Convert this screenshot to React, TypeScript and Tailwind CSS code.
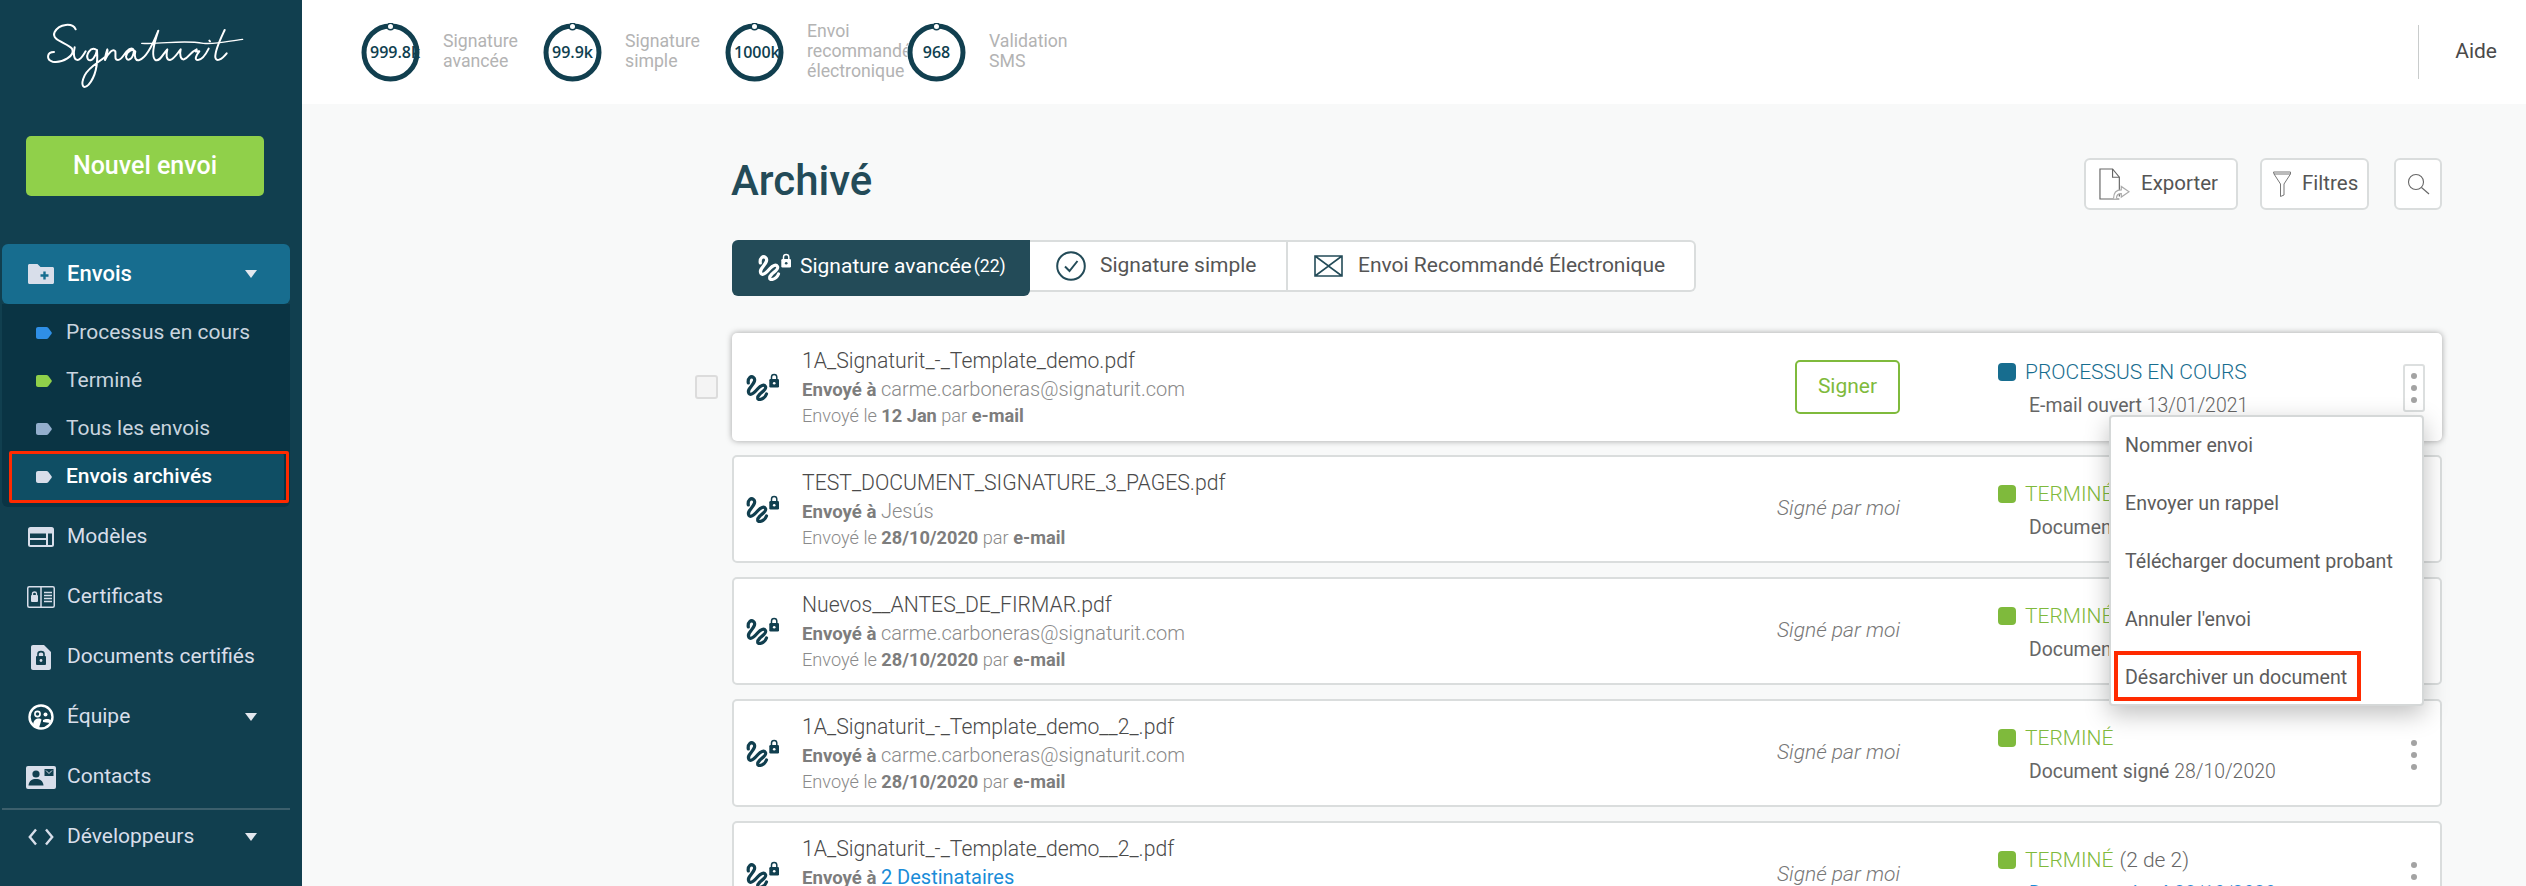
const counters = [
  { value: "999.8k", label: ["Signature", "avancée"] },
  { value: "99.9k", label: ["Signature", "simple"] },
  { value: "1000k", label: ["Envoi", "recommandé", "électronique"] },
  { value: "968", label: ["Validation", "SMS"] },
];

const rows = [
  { name: "TEST_DOCUMENT_SIGNATURE_3_PAGES.pdf", to: "Jesús", date: "28/10/2020" },
  { name: "Nuevos__ANTES_DE_FIRMAR.pdf", to: "carme.carboneras@signaturit.com", date: "28/10/2020" },
  { name: "1A_Signaturit_-_Template_demo__2_.pdf", to: "carme.carboneras@signaturit.com", date: "28/10/2020" },
];

const menu = ["Nommer envoi", "Envoyer un rappel", "Télécharger document probant", "Annuler l'envoi"];

function Logo() {
  return (
    <svg viewBox="0 0 690 270" className="w-[230px] h-[90px]" fill="none" stroke="#fff" strokeWidth="6" strokeLinecap="round" strokeLinejoin="round">
      <path d="M137 58C128 38 88 40 74 66C62 92 112 98 126 116C138 136 96 160 68 155C48 150 50 126 72 126" />
      <path d="M134 112C130 128 130 150 143 150C152 150 158 138 167 124" />
      <path d="M197 118C182 110 166 134 174 148C184 158 198 140 201 120C204 160 196 200 176 224C160 240 150 226 164 196C176 172 204 158 226 140C232 128 234 120 232 118C228 130 225 142 225 150C236 126 250 114 256 124C258 136 252 150 264 150C274 150 280 136 290 124C302 112 316 112 310 132C304 152 290 154 288 140C290 122 308 116 316 124C312 140 316 154 328 150C344 146 362 120 385 62C372 100 364 140 376 150C390 156 400 130 412 118C408 134 408 150 420 150C432 148 442 130 452 118C448 134 452 150 462 148C476 144 480 126 500 118C494 130 498 122 508 124C498 136 492 150 504 150C516 150 526 136 536 116" />
      <path d="M538 92L540 94" />
      <path d="M584 60C570 90 554 122 556 142C558 156 574 150 590 130" />
      <path d="M335 100C400 104 450 88 520 100C560 104 600 92 638 88" strokeWidth="4" />
    </svg>
  );
}

function Tag({ color }: { color: string }) {
  return (
    <svg viewBox="0 0 16 12" className="w-4 h-3 shrink-0">
      <path d="M2 0H10.5C11.2 0 11.8.3 12.2.8L15.6 5.2C15.9 5.7 15.9 6.3 15.6 6.8L12.2 11.2C11.8 11.7 11.2 12 10.5 12H2C.9 12 0 11.1 0 10V2C0 .9.9 0 2 0Z" fill={color} />
    </svg>
  );
}

function Caret() {
  return (
    <svg viewBox="0 0 12 8" className="w-3 h-2 ml-auto mr-[33px]">
      <path d="M0 0H12L6 8Z" fill="#e3e8ef" />
    </svg>
  );
}

const tint = "#d8deea";
const navBg = "#113f4f";

function FolderIcon() {
  return (
    <svg viewBox="0 0 26 20" className="w-[26px] h-5">
      <path d="M1.5 0H9.5L12.5 3H24.5C25.3 3 26 3.7 26 4.5V18.5C26 19.3 25.3 20 24.5 20H1.5C.7 20 0 19.3 0 18.5V1.5C0 .7.7 0 1.5 0Z" fill={tint} />
      <path d="M16.5 7.5V15.5M12.5 11.5H20.5" stroke="#176d8f" strokeWidth="2.4" />
    </svg>
  );
}

function ModelsIcon() {
  return (
    <svg viewBox="0 0 26 20" className="w-[26px] h-5">
      <rect width="26" height="20" rx="2.5" fill={tint} />
      <path d="M2 6.5H18V11H2ZM2 13H18V18H2ZM20 6.5H24V18H20Z" fill={navBg} />
    </svg>
  );
}

function CertIcon() {
  return (
    <svg viewBox="0 0 28 22" className="w-7 h-[22px]" fill="none">
      <rect x=".75" y=".75" width="26.5" height="20.5" rx="1.5" stroke={tint} strokeWidth="1.5" />
      <path d="M14 1V21" stroke={tint} strokeWidth="1.5" />
      <rect x="4" y="9" width="7" height="7" rx="1" fill={tint} />
      <path d="M5.5 9.5V7.5C5.5 5.5 9.5 5.5 9.5 7.5V9.5" stroke={tint} strokeWidth="1.3" />
      <path d="M17 6.5H25M17 9.5H25M17 12.5H25M17 15.5H25" stroke={tint} strokeWidth="1.5" />
    </svg>
  );
}

function DocLockIcon() {
  return (
    <svg viewBox="0 0 20 25" className="w-5 h-[25px]" fill="none">
      <path d="M2 0H13L20 7V23C20 24.1 19.1 25 18 25H2C.9 25 0 24.1 0 23V2C0 .9.9 0 2 0Z" fill={tint} />
      <rect x="5" y="11" width="10" height="9" rx="1" fill={navBg} />
      <path d="M7 11V9C7 5.8 13 5.8 13 9V11" stroke={navBg} strokeWidth="1.6" />
      <circle cx="10" cy="15.5" r="1.4" fill={tint} />
    </svg>
  );
}

function TeamIcon() {
  return (
    <svg viewBox="0 0 26 26" className="w-[26px] h-[26px]" fill="none">
      <circle cx="13" cy="13" r="11.5" stroke="#fff" strokeWidth="2.4" />
      <circle cx="9.5" cy="10" r="2.6" stroke="#fff" strokeWidth="1.6" />
      <circle cx="17.5" cy="10.5" r="2" fill="#fff" />
      <path d="M5 22C5 16 8 14.5 11 14.5C12 14.5 13 15 13.5 15.5L11 24Z" fill="#fff" />
      <path d="M15 16C17 14.5 21 14.5 23 16L22 19L15 18Z" fill="#fff" />
    </svg>
  );
}

function ContactIcon() {
  return (
    <svg viewBox="0 0 30 23" className="w-[30px] h-[23px]" fill="none">
      <rect width="30" height="23" rx="2" fill={tint} />
      <circle cx="10" cy="8" r="3.6" fill={navBg} />
      <path d="M2.5 19.5C3 14.5 6 13 10 13C14 13 17 14.5 17.5 19.5Z" fill={navBg} />
      <rect x="18.5" y="3" width="9" height="7" fill={navBg} />
      <path d="M20 4.5L23 7.5L26 4.5" stroke={tint} strokeWidth="1" />
    </svg>
  );
}

function CodeIcon() {
  return (
    <svg viewBox="0 0 26 18" className="w-[26px] h-[18px]" fill="none" stroke={tint} strokeWidth="2.4">
      <path d="M8 1.5L1.8 9L8 16.5M18 1.5L24.2 9L18 16.5" />
    </svg>
  );
}

function SignIcon({ color, hole, className }: { color: string; hole: string; className: string }) {
  return (
    <svg viewBox="0 0 33 28" className={className} fill="none">
      <path d="M2.3 10C1.5 5 5 2.5 7.5 4.5C10 6.5 8 10 5.5 13C3 16 1.5 18 3 20.5C5 23 9 19 12 15.5C14.5 12.5 18 11 19.5 13.5C21 16 16 19 13.5 21.5C11 24 11 27 14 26.5C17 26 19.5 23.5 20.5 21" stroke={color} strokeWidth="3.2" strokeLinecap="round" />
      <rect x="23.3" y="6" width="9.7" height="8.5" rx="1.2" fill={color} />
      <path d="M25.5 6.5V4C25.5 .5 30.8 .5 30.8 4V6.5" stroke={color} strokeWidth="1.5" />
      <circle cx="28.2" cy="10.2" r="1.3" fill={hole} />
    </svg>
  );
}

function Kebab({ boxed }: { boxed?: boolean }) {
  return (
    <div className={`w-[22px] h-[48px] shrink-0 flex flex-col items-center justify-center gap-[6px] rounded-[3px] border-2 ${boxed ? "border-[#dcdfdf]" : "border-transparent"}`}>
      <span className="w-[6px] h-[6px] rounded-full bg-[#a3a3a3]" />
      <span className="w-[6px] h-[6px] rounded-full bg-[#a3a3a3]" />
      <span className="w-[6px] h-[6px] rounded-full bg-[#a3a3a3]" />
    </div>
  );
}

function Status({ label, color, note, extra, noteColor }: { label: string; color: string; note: string; extra: string; noteColor?: string }) {
  return (
    <div className="w-[405px] shrink-0 self-start pt-[25px]">
      <div className="flex items-center h-[26px]">
        <span className="w-[18px] h-[18px] rounded-[4px] mr-[9px] -mt-[2px]" style={{ background: color }} />
        <span className="text-[21px] font-light" style={{ color }}>{label}</span>
        {extra === "2" && <span className="ml-[6px] text-[21px] font-light text-[#666]">(2 de 2)</span>}
      </div>
      <div className="ml-[31px] mt-[5px] text-[19.4px] text-[#666] whitespace-nowrap" style={{ color: noteColor }}>
        {note} <span className="font-light">{extra === "2" ? "28/10/2020" : extra}</span>
      </div>
    </div>
  );
}

function FileInfo({ name, to, date, link }: { name: string; to: string; date: string; link?: boolean }) {
  return (
    <div className="flex-1 min-w-0">
      <div className="text-[21.2px] leading-[28px] font-light text-[#4a4a4a]">{name}</div>
      <div className="text-[18.6px] leading-[25px] mt-[2px] text-[#8a8a8a] font-light whitespace-nowrap">
        <b className="font-bold text-[#7d7d7d]">Envoyé à</b>{" "}
        <span className={`text-[20px] ${link ? "text-[#1a8cd8] font-normal" : ""}`}>{to}</span>
      </div>
      <div className="text-[18.2px] leading-[25px] text-[#8a8a8a] font-light">
        Envoyé le <b className="font-bold text-[#7d7d7d]">{date}</b> par <b className="font-bold text-[#7d7d7d]">e-mail</b>
      </div>
    </div>
  );
}

function SignedBy() {
  return <div className="w-[140px] shrink-0 text-right text-[21px] italic font-light text-[#777]">Signé par moi</div>;
}

function Row({ children, first }: { children: React.ReactNode; first?: boolean }) {
  return (
    <div className="flex items-start">
      <div className="w-[37px] shrink-0 h-[108px] flex items-center">
        {first && <span className="w-[23px] h-[24px] rounded-[3px] border-2 border-[#dcdcdc] bg-[#f4f4f4]" />}
      </div>
      <div className={`relative flex-1 h-[108px] flex items-center pl-3 pr-[15px] bg-white rounded-[5px] border-2 border-[#dadddd] ${first ? "shadow-[0_0_6px_rgba(0,0,0,0.35)] border-transparent" : ""}`}>
        {children}
      </div>
    </div>
  );
}

function NavItem({ icon, label, caret }: { icon: React.ReactNode; label: string; caret?: boolean }) {
  return (
    <div className="flex items-center h-[60px] ml-[2px] mr-[12px] pl-6">
      <span className="w-[30px] flex justify-center">{icon}</span>
      <span className="ml-[11px] text-[21px] text-[#d8deea]">{label}</span>
      {caret && <Caret />}
    </div>
  );
}

function SubItem({ color, label }: { color: string; label: string }) {
  return (
    <div className="flex items-center h-[48px] pl-[34px]">
      <Tag color={color} />
      <span className="ml-[14px] text-[21px] text-[#c9d4df]">{label}</span>
    </div>
  );
}

export default function App() {
  return (
    <div className="flex w-screen h-screen overflow-hidden font-[Roboto,sans-serif] bg-[#f8f9f9]">
      <aside className="w-[302px] shrink-0 bg-[#113f4f] flex flex-col">
        <div className="h-[136px] pl-[30px] pt-[10px]">
          <Logo />
        </div>
        <button className="mx-[26px] w-[238px] h-[60px] shrink-0 rounded-[5px] bg-[#90d04a] text-white text-[25px] font-medium">Nouvel envoi</button>
        <div className="mt-[48px] ml-[2px] mr-[12px] h-[60px] shrink-0 rounded-[6px] bg-[#176d8f] flex items-center pl-6">
          <span className="w-[30px] flex justify-center"><FolderIcon /></span>
          <span className="ml-[11px] text-[22px] font-medium text-white -mt-[2px]">Envois</span>
          <Caret />
        </div>
        <div className="ml-[2px] mr-[12px] pt-[5px] h-[203px] shrink-0 rounded-b-[6px] bg-[#0a3444]">
          <SubItem color="#2f8fe6" label="Processus en cours" />
          <SubItem color="#90d04a" label="Terminé" />
          <SubItem color="#93aecd" label="Tous les envois" />
          <div className="relative flex items-center h-[48px] ml-[9px] mr-[6px] pl-[25px] bg-[#0f4e64] rounded-[3px]">
            <Tag color="#d8deea" />
            <span className="ml-[14px] text-[21px] font-medium text-white">Envois archivés</span>
            <span className="absolute -left-[2px] -right-[5px] -top-[2px] -bottom-[2px] border-[3px] border-[#ff2a00] rounded-[2px]" />
          </div>
        </div>
        <NavItem icon={<ModelsIcon />} label="Modèles" />
        <NavItem icon={<CertIcon />} label="Certificats" />
        <NavItem icon={<DocLockIcon />} label="Documents certifiés" />
        <NavItem icon={<TeamIcon />} label="Équipe" caret />
        <NavItem icon={<ContactIcon />} label="Contacts" />
        <div className="mt-[1px] ml-[2px] mr-[12px] h-[2px] shrink-0 bg-[#3c5f6c]" />
        <div className="h-[54px] flex items-center ml-[2px] mr-[12px] pl-6">
          <span className="w-[30px] flex justify-center"><CodeIcon /></span>
          <span className="ml-[11px] text-[21px] text-[#d8deea]">Développeurs</span>
          <Caret />
        </div>
      </aside>

      <div className="flex-1 min-w-0 flex flex-col">
        <header className="h-[104px] shrink-0 bg-white flex items-center pl-[59px]">
          {counters.map((c) => (
            <div key={c.value} className="w-[182px] shrink-0 flex items-center">
              <div className="relative w-[59px] h-[59px] shrink-0 rounded-full bg-white flex items-center justify-center">
                <div className="w-[41px] text-center whitespace-nowrap text-[16px] font-['Open_Sans',sans-serif] font-semibold text-[#0f3f50] -mt-[1px]">{c.value}</div>
                <svg viewBox="0 0 59 59" className="absolute inset-0 w-[59px] h-[59px]" fill="none">
                  <circle cx="29.5" cy="29.5" r="26.5" stroke="#113f4f" strokeWidth="5" />
                  <circle cx="29.5" cy="3.5" r="3.2" fill="#fff" stroke="#113f4f" strokeWidth="1.4" />
                </svg>
              </div>
              <div className="ml-[23px] -mt-[2px] text-[17.7px] leading-[20px] text-[#b3b3b3] whitespace-nowrap">
                {c.label.map((l) => (
                  <div key={l}>{l}</div>
                ))}
              </div>
            </div>
          ))}
          <div className="ml-auto w-[1px] h-[54px] bg-[#c9cccc]" />
          <span className="ml-[36px] mr-[29px] text-[21px] text-[#4a4a4a]">Aide</span>
        </header>

        <main className="flex-1 pl-[393px] pr-[84px] pt-[54px]">
          <div className="flex items-center h-[51px] pl-[37px]">
            <h1 className="text-[42px] font-medium text-[#234b58] -mt-[6px] -ml-[1px]">Archivé</h1>
            <div className="ml-auto flex items-center">
              <button className="w-[154px] h-[52px] flex items-center pl-[13px] bg-white border-2 border-[#dadddd] rounded-[6px] text-[20.5px] text-[#555]">
                <svg viewBox="0 0 32 36" className="w-[31px] h-[36px]" fill="none" stroke="#666" strokeWidth="1.2">
                  <path d="M21 31V11L14 2.5H1V33.5H21" />
                  <path d="M14 2.5V11H21" />
                  <path d="M15 33C15 27 17 24 23 24V20.5L31 26L23 31.5V28C20 28 18 30 18 33" stroke="#aaa" fill="#fff" />
                </svg>
                <span className="ml-[11px]">Exporter</span>
              </button>
              <button className="ml-[22px] w-[109px] h-[52px] flex items-center pl-[11px] bg-white border-2 border-[#dadddd] rounded-[6px] text-[20.5px] text-[#555]">
                <svg viewBox="0 0 18 26" className="w-[18px] h-[26px]" fill="none" stroke="#777" strokeWidth="1">
                  <path d="M.5 1H17.5V3L11 13V24L7.5 25.5V13L1 3ZM1 3H17" />
                </svg>
                <span className="ml-[11px]">Filtres</span>
              </button>
              <button className="ml-[25px] w-[48px] h-[52px] flex items-center justify-center bg-white border-2 border-[#dadddd] rounded-[6px]">
                <svg viewBox="0 0 23 22" className="w-[23px] h-[22px]" fill="none" stroke="#666" strokeWidth="1.1">
                  <circle cx="9" cy="9" r="7.5" />
                  <path d="M14.5 14.5L22 21" />
                </svg>
              </button>
            </div>
          </div>

          <div className="mt-[31px] pl-[37px] flex items-start h-[56px]">
            <div className="w-[298px] h-[56px] shrink-0 flex items-center pl-[26px] rounded-l-[6px] rounded-br-[6px] bg-[#234b58] text-white">
              <SignIcon color="#fff" hole="#234b58" className="w-[33px] h-[28px] -mt-[3px]" />
              <span className="ml-[9px] text-[21px] -mt-[3px]">Signature avancée</span>
              <span className="ml-[2px] text-[17.7px] -mt-[3px]">(22)</span>
            </div>
            <div className="w-[258px] h-[52px] shrink-0 flex items-center pl-[26px] bg-white border-y-2 border-r-2 border-[#dadddd] text-[21px] text-[#555]">
              <svg viewBox="0 0 30 30" className="w-[30px] h-[30px]" fill="none" stroke="#234b58" strokeWidth="2">
                <circle cx="15" cy="15" r="13.8" />
                <path d="M9 15.5L13.5 20L21.5 10" />
              </svg>
              <span className="ml-[14px]">Signature simple</span>
            </div>
            <div className="w-[408px] h-[52px] shrink-0 flex items-center pl-[26px] bg-white border-y-2 border-r-2 border-[#dadddd] rounded-r-[6px] text-[21px] text-[#555]">
              <svg viewBox="0 0 29 22" className="w-[29px] h-[22px]" fill="none" stroke="#234b58" strokeWidth="1.6">
                <path d="M1 1H28V21H1ZM1 1L14.5 11L28 1M1 21L14.5 11L28 21" />
              </svg>
              <span className="ml-[15px]">Envoi Recommandé Électronique</span>
            </div>
          </div>

          <div className="mt-[37px] flex flex-col gap-[14px]">
            <Row first>
              <SignIcon color="#113f4f" hole="#fff" className="w-[33px] h-[28px] mr-[23px] shrink-0" />
              <FileInfo name="1A_Signaturit_-_Template_demo.pdf" to="carme.carboneras@signaturit.com" date="12 Jan" />
              <button className="w-[105px] h-[54px] shrink-0 rounded-[5px] border-2 border-[#7fba3c] text-[21px] text-[#7fba3c]">Signer</button>
              <div className="w-[98px] shrink-0" />
              <Status label="PROCESSUS EN COURS" color="#176d8f" note="E-mail ouvert" extra="13/01/2021" />
              <div className="self-start mt-[29px]"><Kebab boxed /></div>
              <div className="absolute left-[1375px] top-[80px] z-10 w-[315px] h-[291px] bg-white rounded-[4px] border-2 border-[#d5d8d8] shadow-[0_8px_24px_rgba(0,0,0,0.25)]">
                {menu.map((m) => (
                  <div key={m} className="h-[58px] pl-[14px] flex items-center text-[19.6px] text-[#5c5c5c]">{m}</div>
                ))}
                <div className="relative h-[58px] pl-[14px] flex items-center text-[19.6px] text-[#5c5c5c]">
                  Désarchiver un document
                  <span className="absolute left-[3px] top-[2px] w-[247px] h-[50px] border-[4px] border-[#ff2a00]" />
                </div>
              </div>
            </Row>
            {rows.map((r) => (
              <Row key={r.name}>
                <SignIcon color="#113f4f" hole="#fff" className="w-[33px] h-[28px] mr-[23px] shrink-0" />
                <FileInfo name={r.name} to={r.to} date={r.date} />
                <SignedBy />
                <div className="w-[98px] shrink-0" />
                <Status label="TERMINÉ" color="#7fba3c" note="Document signé" extra="28/10/2020" />
                <div className="self-start mt-[30px]"><Kebab /></div>
              </Row>
            ))}
            <Row>
              <SignIcon color="#113f4f" hole="#fff" className="w-[33px] h-[28px] mr-[23px] shrink-0" />
              <FileInfo name="1A_Signaturit_-_Template_demo__2_.pdf" to="2 Destinataires" date="28/10/2020" link />
              <SignedBy />
              <div className="w-[98px] shrink-0" />
              <Status label="TERMINÉ" color="#7fba3c" note="Document signé" extra="2" noteColor="#1a8cd8" />
              <div className="self-start mt-[30px]"><Kebab /></div>
            </Row>
          </div>
        </main>
      </div>
    </div>
  );
}
